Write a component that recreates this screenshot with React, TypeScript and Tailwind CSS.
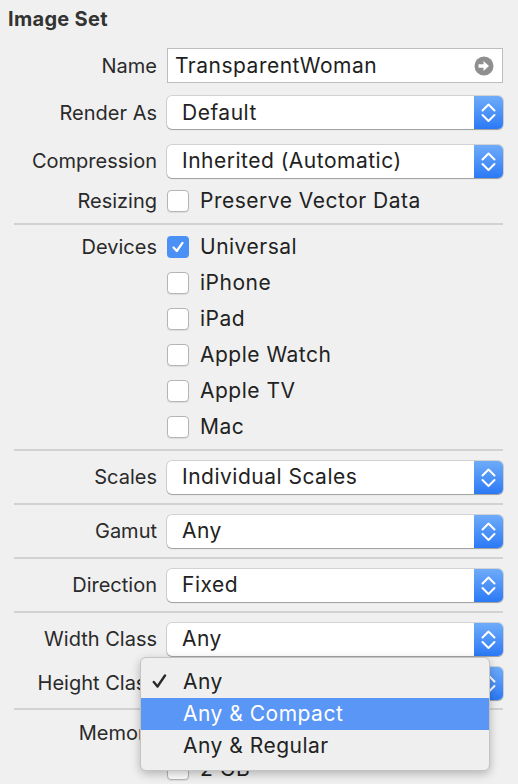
import type { ReactNode } from "react";

const font = { fontFamily: "Inter, 'Open Sans', sans-serif" };

function Stepper() {
  return (
    <div className="flex h-full w-[29px] items-center justify-center rounded-r-[5px] bg-gradient-to-b from-[#6eabf9] to-[#2a79f5]">
      <svg width="29" height="33" viewBox="0 0 29 33" fill="none">
        <path d="M8.5 14.5 L14.5 8.5 L20.5 14.5" stroke="white" strokeWidth="2" strokeLinecap="round" strokeLinejoin="round" />
        <path d="M8.5 19 L14.5 25 L20.5 19" stroke="white" strokeWidth="2" strokeLinecap="round" strokeLinejoin="round" />
      </svg>
    </div>
  );
}

function Popup({ value }: { value: string }) {
  return (
    <div className="flex h-[33px] w-[336px] items-stretch rounded-[5px] bg-white shadow-[0_0_0_1px_rgba(0,0,0,0.12),0_1px_1px_rgba(0,0,0,0.25)]">
      <div className="flex flex-1 items-center pl-[15px] text-[21px] tracking-[0.5px] text-[#222]">{value}</div>
      <Stepper />
    </div>
  );
}

function Checkbox({ checked = false }: { checked?: boolean }) {
  if (checked) {
    return (
      <div className="flex h-[22px] w-[22px] items-center justify-center rounded-[4px] bg-[#4a90f5]">
        <svg width="14" height="14" viewBox="0 0 14 14" fill="none">
          <path d="M2.5 7.5 L5.8 11 L11.5 2.8" stroke="white" strokeWidth="2.2" strokeLinecap="round" strokeLinejoin="round" />
        </svg>
      </div>
    );
  }
  return <div className="h-[22px] w-[22px] rounded-[4px] border border-[#b5b5b5] bg-white shadow-[0_1px_1px_rgba(0,0,0,0.08)]" />;
}

function Row({ label, h, children }: { label?: string; h: string; children: ReactNode }) {
  return (
    <div className={`flex items-center ${h}`}>
      <div className="w-[157px] shrink-0 whitespace-nowrap text-right text-[20px] text-[#2a2a2a]">{label}</div>
      <div className="ml-[10px] flex items-center">{children}</div>
    </div>
  );
}

function Check({ label, checked }: { label: string; checked?: boolean }) {
  return (
    <div className="flex items-center gap-[11px]">
      <Checkbox checked={checked} />
      <span className="text-[21px] tracking-[0.5px] text-[#222]">{label}</span>
    </div>
  );
}

function Sep({ className = "" }: { className?: string }) {
  return <div className={`ml-[14px] h-[2px] w-[489px] bg-[#d2d2d2] ${className}`} />;
}

export default function App() {
  const devices = ["iPhone", "iPad", "Apple Watch", "Apple TV", "Mac"];
  return (
    <div className="relative h-[784px] w-[518px] overflow-hidden bg-[#f0f0f0]" style={font}>
      <div className="pl-[8px] pt-[6px] text-[20px] font-bold leading-[26px] tracking-[0.3px] text-[#333]">Image Set</div>

      <div className="mt-[16px]">
        <Row label="Name" h="h-[35px]">
          <div className="flex h-[35px] w-[336px] items-center border border-[#bdbdbd] bg-white pl-[7px] pr-[8px]">
            <span className="flex-1 text-[21px] tracking-[0.5px] text-[#1e1e1e]">TransparentWoman</span>
            <svg width="20" height="20" viewBox="0 0 20 20">
              <circle cx="10" cy="10" r="9.5" fill="#8f8f8f" />
              <path d="M4.5 8.2 H9.5 V5 L15 10 L9.5 15 V11.8 H4.5 Z" fill="white" />
            </svg>
          </div>
        </Row>
        <div className="mt-[13px]">
          <Row label="Render As" h="h-[33px]">
            <Popup value="Default" />
          </Row>
        </div>
        <div className="mt-[15px]">
          <Row label="Compression" h="h-[34px]">
            <Popup value="Inherited (Automatic)" />
          </Row>
        </div>
        <Row label="Resizing" h="h-[46px]">
          <Check label="Preserve Vector Data" />
        </Row>
      </div>

      <Sep className="-mt-[1px]" />

      <div className="mt-[4px]">
        <Row label="Devices" h="h-[36px]">
          <Check label="Universal" checked />
        </Row>
        {devices.map((d) => (
          <Row key={d} h="h-[36px]">
            <Check label={d} />
          </Row>
        ))}
      </div>

      <Sep className="mt-[4px]" />

      {[
        ["Scales", "Individual Scales"],
        ["Gamut", "Any"],
        ["Direction", "Fixed"],
      ].map(([l, v]) => (
        <div key={l}>
          <Row label={l} h="h-[52px]">
            <Popup value={v} />
          </Row>
          <Sep />
        </div>
      ))}

      <div className="mt-[4px]">
        <Row label="Width Class" h="h-[44px]">
          <Popup value="Any" />
        </Row>
        <Row label="Height Class" h="h-[44px]">
          <Popup value="Any" />
        </Row>
      </div>

      <Sep className="mt-[3px]" />

      <div className="mt-[5px]">
        <Row label="Memory" h="h-[36px]">
          <Check label="1 GB" />
        </Row>
        <Row h="h-[36px]">
          <Check label="2 GB" />
        </Row>
      </div>

      <div className="absolute left-[140px] top-[657px] w-[350px] rounded-[6px] border border-[#c4c4c4] bg-[#efefef] py-[8px] shadow-[0_3px_10px_rgba(0,0,0,0.25)]">
        <div className="relative flex h-[32px] items-center pl-[42px] text-[21px] tracking-[0.5px] text-[#222]">
          <svg className="absolute left-[11px] top-[8px]" width="15" height="15" viewBox="0 0 15 15" fill="none">
            <path d="M1.8 8 L5.5 12.5 L13 1.5" stroke="#2a2a2a" strokeWidth="2.4" strokeLinecap="round" strokeLinejoin="round" />
          </svg>
          Any
        </div>
        <div className="flex h-[32px] items-center bg-[#5a96f5] pl-[42px] text-[21px] tracking-[0.5px] text-white">Any &amp; Compact</div>
        <div className="flex h-[32px] items-center pl-[42px] text-[21px] tracking-[0.5px] text-[#222]">Any &amp; Regular</div>
      </div>
    </div>
  );
}
